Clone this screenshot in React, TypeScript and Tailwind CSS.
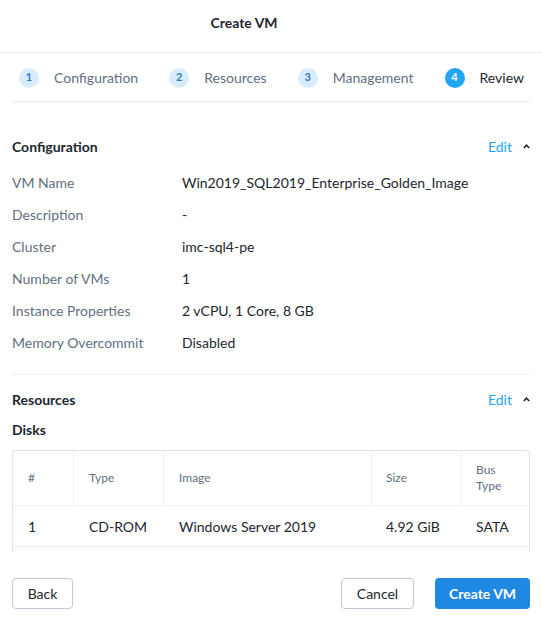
import React from "react";

const rows: [string, string][] = [
  ["VM Name", "Win2019_SQL2019_Enterprise_Golden_Image"],
  ["Description", "-"],
  ["Cluster", "imc-sql4-pe"],
  ["Number of VMs", "1"],
  ["Instance Properties", "2 vCPU, 1 Core, 8 GB"],
  ["Memory Overcommit", "Disabled"],
];

const steps = ["Configuration", "Resources", "Management", "Review"];

function Caret() {
  return (
    <svg width="7" height="5" viewBox="0 0 7 5" className="ml-[11px]">
      <path d="M0.8 4 L3.5 1.2 L6.2 4" fill="none" stroke="#22272e" strokeWidth="1.6" />
    </svg>
  );
}

function SectionHeader({ title }: { title: string }) {
  return (
    <div className="flex items-center justify-between h-[20px]">
      <span className="text-[14px] font-bold text-[#22272e]">{title}</span>
      <div className="flex items-center">
        <span className="text-[14px] text-[#22a5f7]">Edit</span>
        <Caret />
      </div>
    </div>
  );
}

export default function App() {
  return (
    <div className="w-[542px] h-[626px] bg-white flex flex-col overflow-hidden [font-family:Lato,'Open_Sans',sans-serif] text-[#22272e]">
      <div className="h-[53px] shrink-0 flex items-center justify-center pr-[54px] pb-[8px] border-b border-[#eceef1]">
        <span className="text-[14px] font-bold text-[#22272e]">Create VM</span>
      </div>
      <div className="mx-3 h-[49px] shrink-0 flex items-center justify-between pl-[7px] pr-[6px] pt-[1px] border-b border-[#eceef1]">
        {steps.map((s, i) => {
          const active = i === 3;
          return (
            <div key={s} className="flex items-center gap-[15px]">
              <div
                className={
                  active
                    ? "w-[20px] h-[20px] rounded-full bg-[#22a5f7] text-white text-[11px] font-bold flex items-center justify-center"
                    : "w-[20px] h-[20px] rounded-full bg-[#d8ecfb] text-[#2f7cc4] text-[11px] font-bold flex items-center justify-center"
                }
              >
                {i + 1}
              </div>
              <span className={active ? "text-[14px] text-[#22272e]" : "text-[14px] text-[#627080]"}>{s}</span>
            </div>
          );
        })}
      </div>
      <div className="h-[450px] shrink-0 overflow-hidden px-3">
        <div className="pt-[34px]">
          <SectionHeader title="Configuration" />
          <div className="mt-[10px]">
            {rows.map(([k, v]) => (
              <div key={k} className="flex items-center h-[32px] text-[14px]">
                <span className="w-[170px] text-[#627080]">{k}</span>
                <span className="text-[#22272e]">{v}</span>
              </div>
            ))}
          </div>
          <div className="mt-[16px] border-b border-[#eceef1]" />
        </div>
        <div className="pt-[14px]">
          <SectionHeader title="Resources" />
          <div className="mt-[10px] h-[20px] flex items-center text-[14px] font-bold">Disks</div>
          <div className="mt-[11px] border border-b-0 border-[#dfe2e7] rounded-t-[4px]">
            <div className="grid grid-cols-[61px_90px_208px_90px_1fr] h-[55px] border-b border-[#eef0f2] text-[12px] text-[#627080]">
              <div className="px-[15px] leading-[16px] flex items-center border-r border-[#eef0f2]">#</div>
              <div className="px-[15px] leading-[16px] flex items-center border-r border-[#eef0f2]">Type</div>
              <div className="px-[15px] leading-[16px] flex items-center border-r border-[#eef0f2]">Image</div>
              <div className="px-[14px] leading-[16px] flex items-center border-r border-[#eef0f2]">Size</div>
              <div className="px-[14px] leading-[16px] flex items-center">Bus<br />Type</div>
            </div>
            <div className="grid grid-cols-[61px_90px_208px_90px_1fr] border-b border-[#eef0f2] text-[14px] text-[#22272e]">
              <div className="px-[15px] h-[40px] flex items-center">1</div>
              <div className="px-[15px] h-[40px] flex items-center">CD-ROM</div>
              <div className="px-[15px] h-[40px] flex items-center">Windows Server 2019</div>
              <div className="px-[14px] h-[40px] flex items-center">4.92 GiB</div>
              <div className="px-[14px] h-[40px] flex items-center">SATA</div>
            </div>
            <div className="h-[40px]" />
          </div>
        </div>
      </div>
      <div className="flex items-start justify-between px-3 pt-[26px]">
        <button className="h-[31px] w-[61px] rounded-[4px] border border-[#c3c9d3] bg-white text-[14px] text-[#22272e]">Back</button>
        <div className="flex gap-[21px]">
          <button className="h-[31px] w-[73px] rounded-[4px] border border-[#c3c9d3] bg-white text-[14px] text-[#22272e]">Cancel</button>
          <button className="h-[31px] w-[95px] rounded-[4px] bg-[#1f88e3] text-[14px] font-bold text-white">Create VM</button>
        </div>
      </div>
    </div>
  );
}
